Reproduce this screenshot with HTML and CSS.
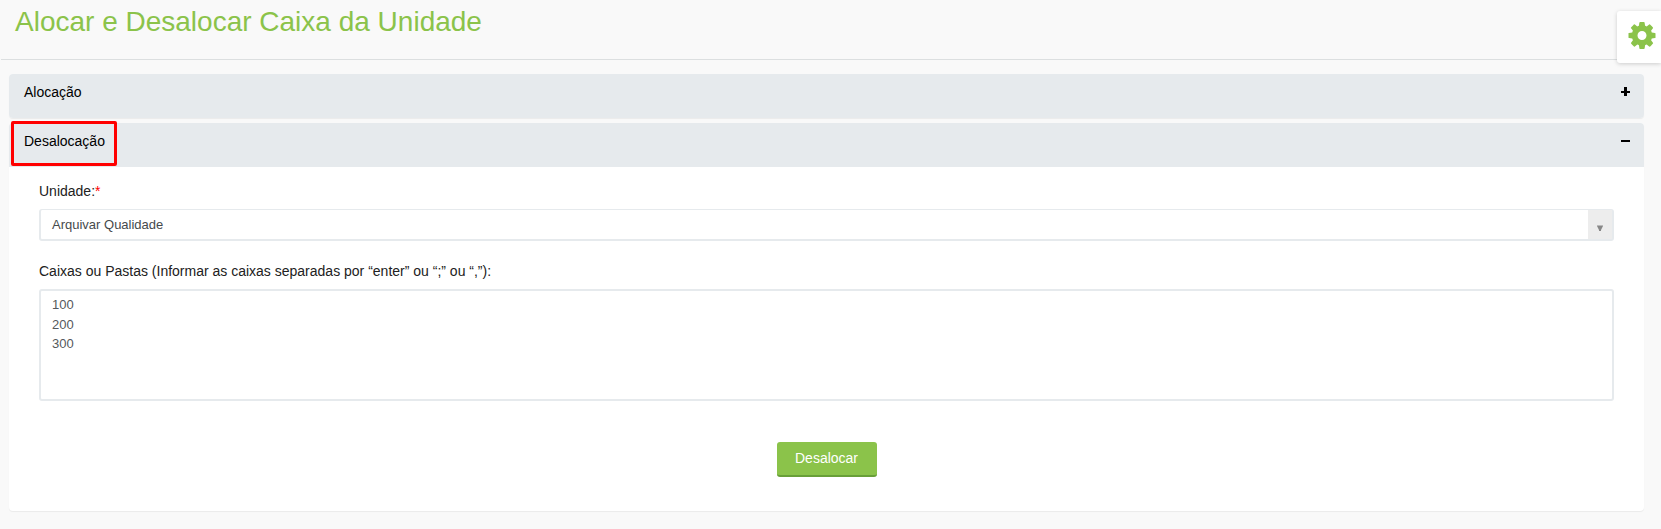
FILE: index.html
```html
<!DOCTYPE html>
<html lang="pt-BR">
<head>
<meta charset="utf-8">
<title>Alocar e Desalocar Caixa da Unidade</title>
<link rel="stylesheet" href="styles.css">
</head>
<body>
<header class="page-header"><h1 class="page-title">Alocar e Desalocar Caixa da Unidade</h1></header>
<button class="settings" aria-label="Configurações">
<svg class="gear" viewBox="0 0 1536 1536"><path fill="#8bc34a" d="M1024 768q0-106-75-181t-181-75-181 75-75 181 75 181 181 75 181-75 75-181zm512-109v222q0 12-8 23t-20 13l-185 28q-19 54-39 91 35 50 107 138 10 12 10 25t-9 23q-27 37-99 108t-94 71q-12 0-26-9l-138-108q-44 23-91 38-16 136-29 186-7 28-36 28H657q-14 0-24.500-8.500T621 1506l-28-184q-49-16-90-37l-141 107q-10 9-25 9-14 0-25-11-126-114-165-168-7-10-7-23 0-12 8-23 15-21 51-66.500t54-70.500q-27-50-41-99L29 913q-13-2-21-12.500T0 877V655q0-12 8-23t19-13l186-28q14-46 39-92-40-57-107-138-10-12-10-24 0-10 9-23 26-36 98.500-107.500T337 135q13 0 26 10l138 107q44-23 91-38 16-136 29-186 7-28 36-28h222q14 0 24.500 8.500T915 30l28 184q49 16 90 37l142-107q9-9 24-9 13 0 25 10 129 119 165 170 7 8 7 22 0 12-8 23-15 21-51 66.500t-54 70.500q26 50 41 98l183 28q13 2 21 12.500t8 23.500z"/></svg>
</button>
<main class="panels">
<section class="panel collapsed"><div class="panel-head"><span>Alocação</span><i class="toggle plus"></i></div></section>
<section class="panel">
<div class="panel-head"><span class="marked">Desalocação</span><i class="toggle"></i></div>
<div class="panel-body">
<label class="label">Unidade:<span class="required">*</span></label>
<div class="select"><span class="select-value">Arquivar Qualidade</span><span class="select-arrow"><svg width="6" height="6" viewBox="0 0 6 6"><path fill="#bbb" d="M0 0h6v1H0z"/><path fill="#888" d="M0 1h6L4 5v1H2V5z"/></svg></span></div>
<label class="label label-boxes">Caixas ou Pastas (Informar as caixas separadas por “enter” ou “;” ou “,”):</label>
<textarea class="boxes">100
200
300</textarea>
<button class="submit">Desalocar</button>
</div>
</section>
</main>
</body>
</html>
```
FILE: styles.css
```css
* { box-sizing: border-box; }
body {
  margin: 0;
  height: 529px;
  overflow: hidden;
  background: #f9f9f9;
  color: #212121;
  font: 14px/20px "Liberation Sans", Arial, sans-serif;
}
.page-header {
  height: 60px;
  margin-left: 1px;
  padding: 6px 0 0 14px;
  border-bottom: 1px solid #dcdfe0;
}
.page-title {
  margin: 0;
  color: #8bc34a;
  font-size: 28px;
  font-weight: 400;
  line-height: 32px;
}
.settings {
  position: absolute;
  top: 11px;
  right: 0;
  width: 44px;
  height: 52px;
  padding: 11px 5px 14px 11px;
  border: 0;
  border-radius: 3px 0 0 3px;
  background: #fff;
  box-shadow: 0 1px 4px rgba(0, 0, 0, .18);
}
.gear { display: block; width: 28px; height: 27px; }
.panels {
  display: flex;
  flex-direction: column;
  gap: 5px;
  width: 1635px;
  margin: 14px 0 0 9px;
}
.panel {
  border-radius: 4px;
  background: #fff;
  box-shadow: 0 1px 1px rgba(0, 0, 0, .06);
}
.panel-head {
  display: flex;
  justify-content: space-between;
  height: 44px;
  padding: 8px 14px 0 15px;
  border-radius: 4px 4px 0 0;
  background: #e6eaed;
  color: #000;
}
.collapsed .panel-head { border-radius: 4px; }
.marked { position: relative; }
.marked::after {
  content: "";
  position: absolute;
  box-sizing: border-box;
  left: -13px;
  top: -10px;
  width: 106px;
  height: 45px;
  border: 3px solid #f00;
  border-radius: 2px;
}
.toggle {
  width: 9px;
  height: 9px;
  margin-top: 5px;
  background: linear-gradient(#000, #000) 0 4px / 9px 2px no-repeat;
}
.plus {
  background: linear-gradient(#000, #000) 0 4px / 9px 2px no-repeat,
    linear-gradient(#000, #000) 3px 0 / 3px 9px no-repeat;
}
.panel-body {
  display: flex;
  flex-direction: column;
  height: 344px;
  padding: 14px 30px 0;
}
.label { display: block; height: 20px; }
.required { color: #f00; }
.select {
  display: flex;
  flex-shrink: 0;
  justify-content: space-between;
  height: 32px;
  margin-top: 8px;
  border: 2px solid #e6eaed;
  border-top-width: 1px;
  border-radius: 3px;
  color: #464a4c;
  font-size: 13px;
}
.select-value { padding: 5px 0 0 11px; }
.select-arrow {
  width: 24px;
  padding: 15px 0 0 9px;
  background: #ededed;
  line-height: 0;
}
.label-boxes { margin-top: 20px; }
.boxes {
  display: block;
  flex-shrink: 0;
  width: 100%;
  height: 112px;
  margin: 8px 0 0;
  padding: 4px 11px;
  border: 2px solid #e6eaed;
  border-radius: 3px;
  outline: 0;
  resize: none;
  background: #fff;
  color: #55595c;
  font: 13px/19.5px "Liberation Sans", Arial, sans-serif;
}
.submit {
  align-self: center;
  width: 100px;
  height: 35px;
  margin-top: 41px;
  padding: 0 0 1px;
  border: 0;
  border-bottom: 2px solid #689f38;
  border-radius: 3px;
  background: #8bc34a;
  color: #fff;
  font: 14px/20px "Liberation Sans", Arial, sans-serif;
}
```
